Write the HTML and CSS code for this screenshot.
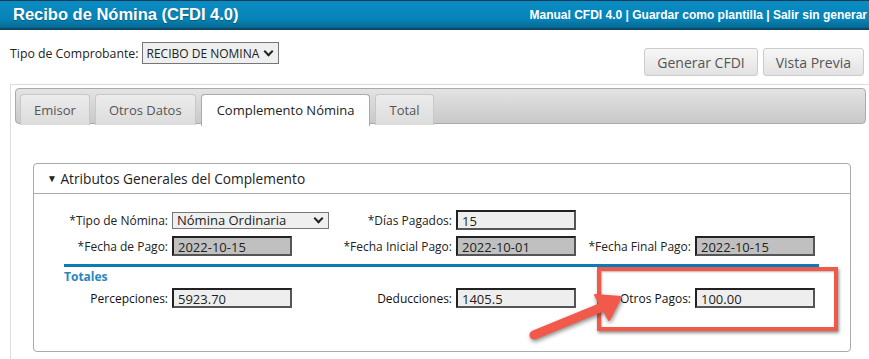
FILE: index.html
```html
<!DOCTYPE html>
<html>
<head>
    <title>Recibo de Nómina (CFDI 4.0)</title>
    <link rel="stylesheet" href="styles.css">
</head>
<body>
    <div class="topbar">
        <h1>Recibo de Nómina (CFDI 4.0)</h1>
        <div class="links">Manual CFDI 4.0 | Guardar como plantilla | Salir sin generar</div>
    </div>

    <div class="toolbar">
        <div class="tipo">
            <span>Tipo de Comprobante:</span>
            <div class="select sel-tipo">RECIBO DE NOMINA <span class="chev"></span></div>
        </div>
        <div class="actions">
            <button>Generar CFDI</button>
            <button>Vista Previa</button>
        </div>
    </div>

    <div class="tabs">
        <div class="tab-bar">
            <div class="tab">Emisor</div>
            <div class="tab">Otros Datos</div>
            <div class="tab active">Complemento Nómina</div>
            <div class="tab">Total</div>
        </div>

        <div class="tab-body">
            <div class="panel">
                <div class="panel-head"><span class="tri">&#9660;</span> Atributos Generales del Complemento</div>
                <div class="panel-content">
                    <div class="grid">
                        <label>*Tipo de Nómina:</label>
                        <div class="select sel-nomina">Nómina Ordinaria <span class="chev"></span></div>
                        <label>*Días Pagados:</label>
                        <div class="field">15</div>
                        <span></span><span></span>

                        <label>*Fecha de Pago:</label>
                        <div class="field disabled">2022-10-15</div>
                        <label>*Fecha Inicial Pago:</label>
                        <div class="field disabled">2022-10-01</div>
                        <label>*Fecha Final Pago:</label>
                        <div class="field disabled">2022-10-15</div>
                    </div>

                    <div class="totales">
                        <div class="totales-title">Totales</div>
                        <div class="grid">
                            <label class="plain">Percepciones:</label>
                            <div class="field">5923.70</div>
                            <label class="plain">Deducciones:</label>
                            <div class="field">1405.5</div>
                            <label class="plain">Otros Pagos:</label>
                            <div class="field">100.00</div>
                        </div>
                    </div>
                </div>
            </div>
        </div>
    </div>

    <!-- annotation -->
    <div class="highlight"></div>
    <svg class="arrow" width="869" height="359" viewBox="0 0 869 359">
        <line x1="534" y1="335" x2="600" y2="308" stroke="#f15a4a" stroke-width="9" stroke-linecap="round"/>
        <polygon points="621,297 595,295 609,320" fill="#f15a4a" stroke="#f15a4a" stroke-width="2" stroke-linejoin="round"/>
    </svg>
</body>
</html>
```

FILE: styles.css
```css
body {
    margin: 0;
    font-family: "Open Sans", "Noto Sans", sans-serif;
    color: #222;
    background: #fff;
    overflow: hidden;
}

.topbar {
    height: 27px;
    display: flex;
    align-items: center;
    justify-content: space-between;
    background: linear-gradient(#0a8dc4, #0782b6 70%, #06668f);
    border-top: 1px solid #1d3a4d;
    border-bottom: 2px solid #0b4866;
    color: white;
}

.topbar h1 {
    margin: 0 0 0 13px;
    font-family: "Liberation Sans", Arial, sans-serif;
    font-size: 16.5px;
    font-weight: bold;
    text-shadow: 0 1px 1px rgba(0,0,0,0.3);
}

.links {
    font-family: "Liberation Sans", Arial, sans-serif;
    font-size: 12px;
    font-weight: bold;
    margin-right: 2px;
    white-space: nowrap;
}

.toolbar {
    display: flex;
    justify-content: space-between;
    align-items: flex-start;
    padding: 12px 5px 0 10px;
    height: 42px;
}

.tipo {
    display: flex;
    align-items: center;
    gap: 3px;
    font-size: 12.3px;
}

.select {
    display: flex;
    align-items: center;
    justify-content: space-between;
    box-sizing: border-box;
    background: #efefef;
    border: 1px solid #767676;
    font-size: 12px;
    padding: 0 4px;
}

.sel-tipo {
    width: 137px;
    height: 22px;
}

.chev {
    width: 5px;
    height: 5px;
    border-right: 2px solid #222;
    border-bottom: 2px solid #222;
    transform: rotate(45deg);
    margin: -4px 2px 0 0;
}

.actions {
    display: flex;
    gap: 5px;
    margin-top: 6px;
}

.actions button {
    height: 28px;
    padding: 0 12px;
    font-family: "Open Sans", sans-serif;
    font-size: 14px;
    color: #555;
    background: linear-gradient(#f7f7f7, #e2e2e2);
    border: 1px solid #cbcbcb;
    border-radius: 3px;
}

.tabs {
    margin-left: 10px;
    border-top: 1px solid #ddd;
    border-left: 1px solid #ddd;
    padding: 3px 3px 0 4px;
    height: 280px;
}

.tab-bar {
    display: flex;
    gap: 5px;
    height: 36px;
    box-sizing: border-box;
    padding: 5px 0 0 4px;
    border: 1px solid #aaa;
    border-radius: 4px;
    background: linear-gradient(#e3e3e3, #c9c9c9);
}

.tab {
    height: 31px;
    box-sizing: border-box;
    padding: 6px 13px 0;
    font-size: 13px;
    color: #555;
    background: linear-gradient(#ececec, #dcdcdc);
    border: 1px solid #c8c8c8;
    border-bottom: none;
    border-radius: 4px 4px 0 0;
}

.tab.active {
    height: 32px;
    padding: 6px 15px 0;
    background: white;
    color: #222;
    border-color: #aaa;
}

.tab-body {
    padding: 39px 15px 0 18px;
}

.panel {
    border: 1px solid #aaa;
    border-radius: 4px;
    height: 187px;
}

.panel-head {
    height: 30px;
    box-sizing: border-box;
    padding: 5px 0 0 13px;
    font-size: 13.7px;
    color: #222;
    border-bottom: 1px solid #aaa;
}

.tri {
    font-size: 10px;
    position: relative;
    top: -2px;
}

.panel-content {
    padding: 16px 0 0 30px;
}

.grid {
    display: grid;
    grid-template-columns: 108px 120px 164px 120px 119px 120px;
    row-gap: 6px;
    align-items: center;
}

.grid label {
    text-align: right;
    padding-right: 4px;
    font-size: 12px;
    color: #222;
}

.grid label.plain {
    color: #111;
}

.sel-nomina {
    width: 157px;
    height: 17px;
    font-size: 13px;
}

.field {
    box-sizing: border-box;
    width: 120px;
    height: 20px;
    padding: 2px 0 0 4px;
    font-size: 13px;
    line-height: 15px;
    background: #eee;
    border: 2px solid #555;
    border-top-color: #222;
    border-left-color: #222;
}

.field.disabled {
    background: #c0c0c0;
}

.totales {
    margin-top: 8px;
    width: 755px;
    border-top: 3px solid #0a7db6;
}

.totales-title {
    font-size: 12px;
    font-weight: bold;
    color: #2a86bd;
    padding: 1px 0 3px;
}

.highlight {
    position: absolute;
    left: 597px;
    top: 267px;
    width: 233px;
    height: 56px;
    border: 4px solid #f15a4a;
    box-shadow: 1px 2px 3px rgba(0,0,0,0.45), inset 1px 1px 2px rgba(0,0,0,0.3);
}

.arrow {
    position: absolute;
    left: 0;
    top: 0;
    filter: drop-shadow(1px 2px 2px rgba(0,0,0,0.45));
}
```
